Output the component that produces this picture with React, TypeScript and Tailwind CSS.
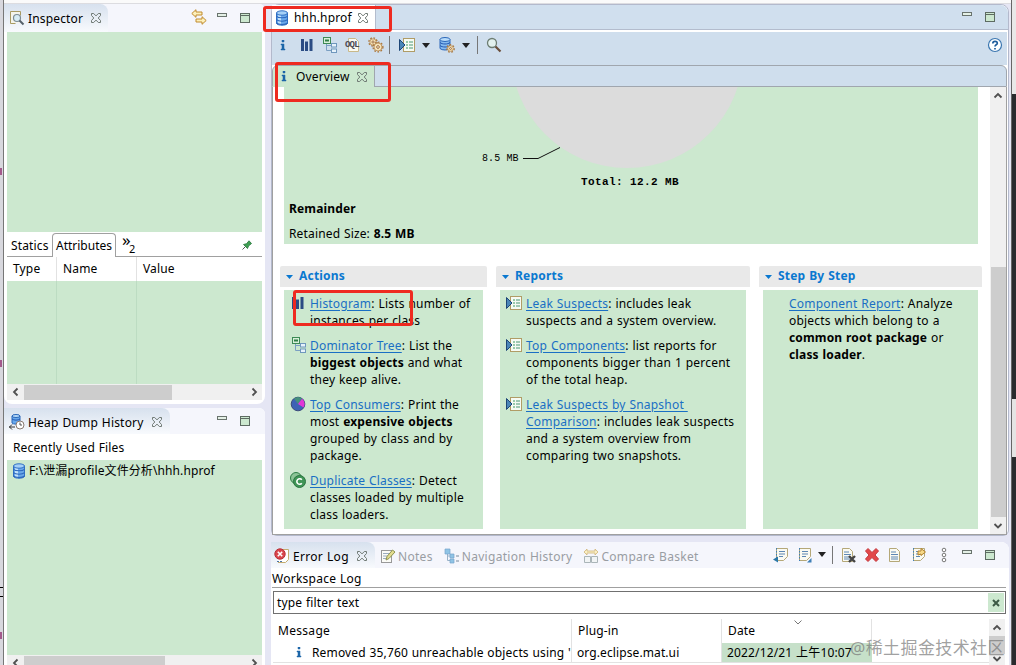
import type { ReactNode } from 'react';
import clsx from 'clsx';

type IconProps = { className?: string };

interface SvgProps extends IconProps {
  children: ReactNode;
  size?: number;
}

function Svg({ children, className, size = 16 }: SvgProps) {
  return (
    <svg
      width={size}
      height={size}
      viewBox="0 0 16 16"
      fill="none"
      className={clsx('shrink-0', className)}
    >
      {children}
    </svg>
  );
}

const CloseIcon = ({ className }: IconProps) => (
  <svg width="12" height="12" viewBox="0 0 12 12" fill="none" className={clsx('shrink-0', className)}>
    <path
      d="M1.500 1.500h2.200L6 3.900l2.300-2.400h2.200v2L8.200 6l2.300 2.500v2H8.300L6 8.100l-2.300 2.400H1.500v-2L3.800 6 1.500 3.500z"
      stroke="#707a75"
    />
  </svg>
);

const MinimizeIcon = ({ className }: IconProps) => (
  <svg width="10" height="4" viewBox="0 0 10 4" className={clsx('shrink-0', className)}>
    <rect x=".5" y=".5" width="9" height="3" fill="#e4f0e6" stroke="#69736d" />
  </svg>
);

const MaximizeIcon = ({ className }: IconProps) => (
  <svg width="10" height="10" viewBox="0 0 10 10" className={clsx('shrink-0', className)}>
    <rect x=".5" y=".5" width="9" height="9" fill="#cce8cf" stroke="#5d6b62" />
    <path d="M0 2.500h10" stroke="#5d6b62" />
  </svg>
);

const WindowControls = ({ className }: IconProps) => (
  <div className={clsx('flex items-start gap-[13px]', className)}>
    <MinimizeIcon />
    <MaximizeIcon />
  </div>
);

const Caret = ({ className }: IconProps) => (
  <svg width="8" height="5" viewBox="0 0 8 5" className={clsx('shrink-0', className)}>
    <path d="M0 0h8L4 5z" fill="#222" />
  </svg>
);

const InfoIcon = ({ className }: IconProps) => (
  <svg width="6" height="11" viewBox="0 0 6 11" className={clsx('shrink-0', className)}>
    <path d="M2 0h2v2H2zM1 4h3v5h1v1H1V9h1V5H1z" fill="#1c67a8" stroke="#1c67a8" strokeWidth=".5" />
  </svg>
);

const DatabaseIcon = ({ className }: IconProps) => (
  <Svg className={className}>
    <path d="M2.500 3v10.500C4 15.800 12 15.800 13.500 13.500V3z" fill="#6aa8ea" stroke="#2f6fc4" />
    <path d="M4 4v10c1 .8 2 1 3 1.200V5z" fill="#c2e2fb" />
    <path
      d="M2.500 6.300c2 2 9 2 11 0M2.500 9.700c2 2 9 2 11 0M2.500 13c2 2 9 2 11 0"
      stroke="#2b66bd"
      strokeWidth="1.100"
    />
    <ellipse cx="8" cy="3" rx="5.500" ry="2.200" fill="#a5d0f7" stroke="#2f6fc4" />
  </Svg>
);

const InspectorIcon = () => (
  <Svg>
    <path d="M2 2h9v11H2z" fill="#f4f4ec" />
    <path d="M1.500 1.500h10v4M1.500 1.500v12h5" stroke="#a99b62" />
    <circle cx="8" cy="8" r="3.500" fill="#d7ecf4" stroke="#7d8c94" strokeWidth="1.200" />
    <path d="M10.500 10.500l4 4" stroke="#55606a" strokeWidth="2" />
  </Svg>
);

const LinkArrowsIcon = () => (
  <Svg>
    <path d="M.8 4.500L5 .7v2.300h6v3H5v2.300z" fill="#fdf0b9" stroke="#c08a2c" />
    <path d="M15.200 11.500L11 7.700V10H5v3h6v2.300z" fill="#fdf0b9" stroke="#c08a2c" />
  </Svg>
);

const PinIcon = () => (
  <svg width="10" height="10" viewBox="0 0 10 10" className="shrink-0">
    <path d="M.5 9.500l3-3" stroke="#555" />
    <path d="M1.500 4.500l4 4 1-2.500 3-2.500L7 .8 4.500 3.700z" fill="#3f9f54" stroke="#27743a" strokeWidth=".8" />
  </svg>
);

const HistoryIcon = () => (
  <Svg>
    <path d="M3 2v7c1.500 1.500 6 1.500 8 0V2z" fill="#69a9ec" stroke="#2a66b8" />
    <path d="M3 5c2 1.500 6 1.500 8 0" stroke="#2358b0" />
    <ellipse cx="7" cy="2" rx="4" ry="1.500" fill="#b9dcfa" stroke="#2a66b8" />
    <circle cx="11" cy="11" r="4" fill="#fff" stroke="#8a7b72" />
    <path d="M11 8.500V11h2" stroke="#555" />
    <path d="M0 13h6M3 10.500L.5 13 3 15.500" stroke="#333" />
  </Svg>
);

const HistogramIcon = ({ className }: IconProps) => (
  <Svg className={className}>
    <path d="M2 2h3v12H2zM6 4.500h3V14H6zM10.500 2h3v12h-3z" fill="#2b4c84" />
  </Svg>
);

const TreeIcon = ({ className }: IconProps) => (
  <Svg className={className}>
    <path d="M4.500 7v6.500H10M4.500 8.500H10" stroke="#7a9fc2" />
    <rect x="1.500" y=".5" width="7" height="6" fill="#d8f0da" stroke="#3d8a55" />
    <path d="M3 3.500h4" stroke="#2f7d45" strokeWidth="2" />
    <rect x="9.500" y="6.500" width="5" height="3.500" fill="#e6f2fb" stroke="#6f97bd" />
    <rect x="9.500" y="12" width="5" height="3.500" fill="#e6f2fb" stroke="#6f97bd" />
  </Svg>
);

const OqlIcon = () => (
  <div className="relative h-4 w-4 shrink-0">
    <Svg>
      <path d="M3.500 1.500h7l3 3v10h-10z" fill="#fbfaf2" stroke="#c9b98a" />
    </Svg>
    <span className="absolute top-[4px] left-0 font-['Liberation_Mono'] text-[9px] leading-[9px] font-bold tracking-[-0.8px] text-[#4a4a55]">
      OQL
    </span>
  </div>
);

const GearIcon = ({ x = 8, y = 8, r = 4 }: { x?: number; y?: number; r?: number }) => (
  <>
    <circle cx={x} cy={y} r={r + 0.9} stroke="#ab7a42" strokeWidth="1.400" strokeDasharray="1.700 1.500" />
    <circle cx={x} cy={y} r={r} fill="#f5e3ba" stroke="#b5874c" strokeWidth=".8" />
    <circle cx={x} cy={y} r={r / 3} fill="#fff" stroke="#96622a" strokeWidth=".9" />
  </>
);

const GearsIcon = () => (
  <Svg>
    <GearIcon x={5} y={5} r={3.2} />
    <GearIcon x={10} y={10} r={4} />
  </Svg>
);

const ReportIcon = ({ className }: IconProps) => (
  <Svg className={className}>
    <rect x="4.500" y="1.500" width="11" height="13" fill="#f6fbf4" stroke="#b09c66" />
    <path d="M7 5h2M7 8h2M7 11h2" stroke="#3c9a62" />
    <path d="M10 5h4M10 8h4M10 11h4" stroke="#4a9874" />
    <path d="M.5 2.500v11L6 8z" fill="#4a86b8" stroke="#1d4676" />
  </Svg>
);

const DatabaseGearIcon = () => (
  <Svg>
    <path d="M1 2.500v9c2 2 8 2 10 0v-9z" fill="#86bbf0" stroke="#2a66b8" />
    <path d="M1 5.500c2 2 8 2 10 0M1 8.500c2 2 8 2 10 0" stroke="#2358b0" />
    <ellipse cx="6" cy="2.500" rx="5" ry="2" fill="#b9dcfa" stroke="#2a66b8" />
    <GearIcon x={11.5} y={11.5} r={2.8} />
  </Svg>
);

const SearchIcon = () => (
  <Svg>
    <circle cx="6" cy="6" r="4.500" fill="#e3f1ee" stroke="#6d7d72" strokeWidth="1.300" />
    <path d="M9.500 9.500l5 5" stroke="#6b4f3b" strokeWidth="2.200" />
  </Svg>
);

const HelpIcon = () => (
  <Svg>
    <circle cx="8" cy="8" r="6.500" fill="#fff" stroke="#3a76b0" strokeWidth="1.200" />
    <path
      d="M5.800 6.500c0-3 4.500-2.800 4.500-.3C10.300 7.800 8 7.800 8 9.500M8 11v1.600"
      stroke="#1f5d9c"
      strokeWidth="1.700"
    />
  </Svg>
);

const PieIcon = ({ className }: IconProps) => (
  <Svg className={className}>
    <circle cx="8" cy="8" r="6.800" fill="#3d62b5" stroke="#3b4a7a" />
    <path d="M8 8L4 2.500a6.500 6.500 0 0 1 8 0z" fill="#45907d" />
    <path d="M8 8l4-5.200a6.500 6.500 0 0 1 1.500 8.700z" fill="#e238d6" />
  </Svg>
);

const DuplicateIcon = ({ className }: IconProps) => (
  <Svg className={className}>
    <circle cx="6" cy="6" r="5.500" fill="#8cc497" stroke="#2e7d46" />
    <circle cx="9.500" cy="9.500" r="6" fill="#3f9556" stroke="#2a7440" />
    <path d="M11.800 7.700a2.800 2.800 0 1 0 0 3.600" stroke="#fff" strokeWidth="1.600" />
  </Svg>
);

const ErrorLogIcon = () => (
  <Svg>
    <path d="M5 1.500h9.500v10l-3 3H4" fill="#fff" stroke="#c5ad70" />
    <circle cx="6" cy="6" r="5.200" fill="#d9464c" stroke="#b92f38" />
    <path d="M3.800 3.800l4.400 4.400M8.200 3.800L3.800 8.200" stroke="#fff" strokeWidth="1.600" />
    <path d="M3 13.500h6" stroke="#4b75a8" strokeDasharray="2 1" />
  </Svg>
);

const NotesIcon = () => (
  <Svg>
    <rect x="1.500" y="2.500" width="10" height="12" fill="#fbfbf7" stroke="#999" />
    <path d="M3 5.500h6M3 8h5M3 10.500h3" stroke="#9bacc0" />
    <path d="M6 12l1-3.500L12.500 2 15 4 9 10.500z" fill="#e3dc8e" stroke="#8e9450" />
  </Svg>
);

const NavigationIcon = () => (
  <Svg>
    <path d="M3.500 5v7.500H8M3.500 8H8" stroke="#9ab2c8" />
    <path d="M1 1h5v5H1zM6 6h4v4H6zM6 11h4v4H6z" fill="#8fc4e5" stroke="#77a5cb" strokeWidth=".7" />
    <path d="M12 8h3M12 13h3" stroke="#789" strokeWidth="1.200" />
  </Svg>
);

const CompareIcon = () => (
  <Svg>
    <path d="M1 4l3-3v2h8V1l3 3-3 3V5H4v2z" fill="#fbf0c5" stroke="#cfb477" strokeWidth=".8" />
    <path d="M1.500 8.500h6v6h-6zM8.500 8.500h6v6h-6z" fill="#f1f4f5" stroke="#aab5b8" />
  </Svg>
);

// Log page with ruled lines; transfer variants use a dotted blue margin
const SheetIcon = ({ variant }: { variant?: 'export' | 'import' | 'clear' | 'restore' }) => (
  <Svg>
    {variant === 'export' || variant === 'import' || variant === 'restore' ? (
      <>
        <path d="M3.500 1.500h11v8l-4 4h-7z" fill="#fafaf2" stroke="#b5a878" />
        <path d="M3.500 1v13" stroke="#3f7fb6" strokeDasharray="1.500 1.500" />
        <path d="M6 4.500h6M6 7h6M6 9.500h4" stroke="#5c87b4" />
      </>
    ) : (
      <>
        <path d="M2.500 1.500h7l3 3v10h-10z" fill="#fafaf2" stroke="#b5a878" />
        <path d="M4 5h5M4 7.500h7M4 10h7M4 12h7" stroke="#5c87b4" />
      </>
    )}
    {variant === 'export' && <path d="M0 12.500l5-3v6z" fill="#2c78a8" />}
    {variant === 'import' && <path d="M15.500 11v4.500H11z" fill="#3f7fb6" />}
    {variant === 'clear' && <path d="M9 9l6 6M15 9l-6 6" stroke="#444" strokeWidth="2.400" />}
    {variant === 'restore' && (
      <path d="M8 8V4h3V1.500L15.500 5 11 8.500V7z" fill="#f6d987" stroke="#b3822c" />
    )}
  </Svg>
);

const DeleteIcon = () => (
  <Svg>
    <path
      d="M1.500 4l2.500-2.500 4 4 4-4L14.500 4 11 8l3.500 4-2.500 2.500-4-4-4 4L1.500 12 5 8z"
      fill="#e2484a"
      stroke="#c5383c"
    />
  </Svg>
);

const MoreIcon = () => (
  <Svg>
    <g stroke="#777" fill="#fff">
      <circle cx="8" cy="3" r="1.800" />
      <circle cx="8" cy="8" r="1.800" />
      <circle cx="8" cy="13" r="1.800" />
    </g>
  </Svg>
);

const chevrons = {
  up: 'M1.500 6.500L5 3 8.500 6.500',
  down: 'M1.500 3L5 6.500 8.500 3',
  left: 'M6.500 1.500L3 5l3.500 3.500',
  right: 'M3.500 1.500L7 5 3.500 8.500',
};

const Chevron = ({ dir }: { dir: keyof typeof chevrons }) => (
  <svg width="10" height="10" viewBox="0 0 10 10" fill="none" className="shrink-0">
    <path d={chevrons[dir]} stroke="#505050" strokeWidth="1.800" />
  </svg>
);

function HScrollbar({ thumb }: { thumb: string }) {
  return (
    <div className="flex h-4 shrink-0 items-center bg-[#f0f0f0]">
      <div className="flex w-[17px] justify-center">
        <Chevron dir="left" />
      </div>
      <div className={clsx('h-[15px] bg-[#cdcdcd]', thumb)} />
      <div className="ml-auto flex w-[17px] justify-center">
        <Chevron dir="right" />
      </div>
    </div>
  );
}

const Link = ({ children }: { children: ReactNode }) => (
  <span className="text-[#1a6fc4] underline underline-offset-2">{children}</span>
);

function Item({ icon, children }: { icon?: ReactNode; children: ReactNode }) {
  return (
    <div className="mb-2 flex">
      <div className="w-[20px] shrink-0">{icon}</div>
      <p className="whitespace-nowrap">{children}</p>
    </div>
  );
}

interface SectionProps {
  title: string;
  width: string;
  children: ReactNode;
}

function Section({ title, width, children }: SectionProps) {
  return (
    <section className={clsx('flex shrink-0 flex-col', width)}>
      <h2 className="flex h-[21px] items-center gap-[6px] rounded-t-xs bg-[#e9e9e9] pb-[2px] pl-[6px] font-bold tracking-[0.2px] text-[#0a78d0]">
        <svg width="7" height="4" viewBox="0 0 7 4" className="mt-[2px]">
          <path d="M0 0h7L3.500 4z" fill="#0a78d0" />
        </svg>
        {title}
      </h2>
      <div className="mx-1 mt-[3px] h-[239px] bg-[#cce8cf] pt-[5px] pl-[6px] leading-[17px] tracking-[0.2px]">
        {children}
      </div>
    </section>
  );
}

function InspectorView() {
  return (
    <section className="flex h-[400px] flex-col rounded-t-md rounded-b-lg bg-white px-[3px] pb-[3px]">
      <header className="-mx-[3px] flex h-[28px] shrink-0 items-center rounded-t-md bg-[#f5f6fc]">
        <div className="flex h-full w-[104px] items-center rounded-tr-lg bg-linear-to-b from-[#d7e1ee] to-[#f8fafd] pl-[5px]">
          <InspectorIcon />
          <span className="ml-[3px]">Inspector</span>
          <CloseIcon className="ml-[7px]" />
        </div>
        <div className="ml-auto flex pr-[15px] pb-[3px]">
          <LinkArrowsIcon />
          <WindowControls className="mt-[4px] ml-[10px]" />
        </div>
      </header>
      <div className="h-[200px] shrink-0 bg-[#cce8cf]" />
      <div className="flex h-[25px] shrink-0 items-end border-b border-[#a0a0a0]">
        <span className="flex h-[22px] w-[45px] items-center pl-1">Statics</span>
        <span className="-mb-px flex h-[24px] w-[64px] items-center justify-center rounded-t border border-b-0 border-[#a0a0a0] bg-white tracking-normal">
          Attributes
        </span>
        <span className="relative h-[23px] w-5 pl-[6px] text-[17px] leading-[13px]">
          »<sub className="absolute top-[10px] left-[13px] text-[11px] leading-[12px]">2</sub>
        </span>
        <div className="mr-[10px] ml-auto pb-[6px]">
          <PinIcon />
        </div>
      </div>
      <div className="flex h-[24px] shrink-0 items-center">
        <span className="flex h-full w-[50px] items-center border-r border-[#e2e2e2] pb-px pl-[6px]">Type</span>
        <span className="flex h-full w-[80px] items-center border-r border-[#e2e2e2] pb-px pl-[6px]">Name</span>
        <span className="pb-px pl-[6px]">Value</span>
      </div>
      <div className="flex h-[103px] shrink-0 bg-[#cce8cf]">
        <div className="w-[50px] border-r border-[#bcdcc2]" />
        <div className="w-[80px] border-r border-[#bcdcc2]" />
      </div>
      <HScrollbar thumb="w-[148px]" />
    </section>
  );
}

function HeapHistoryView() {
  return (
    <section className="mt-[4px] flex flex-1 flex-col rounded-t-md bg-white px-[3px]">
      <header className="-mx-[3px] flex h-[26px] shrink-0 items-center rounded-t-md bg-[#f5f6fc]">
        <div className="flex h-full w-[166px] items-center rounded-tr-lg bg-linear-to-b from-[#d7e1ee] to-[#f8fafd] pt-[2px] pl-[5px]">
          <HistoryIcon />
          <span className="ml-[3px] tracking-[0.2px]">Heap Dump History</span>
          <CloseIcon className="ml-[7px]" />
        </div>
        <WindowControls className="mr-[15px] ml-auto" />
      </header>
      <div className="flex h-[26px] shrink-0 items-center pt-px pl-[6px]">Recently Used Files</div>
      <div className="h-[195px] shrink-0 bg-[#cce8cf] pl-1">
        <div className="flex h-[21px] items-center gap-[2px] whitespace-nowrap">
          <DatabaseIcon />
          <span className="tracking-[0.1px]">F:\泄漏profile文件分析\hhh.hprof</span>
        </div>
      </div>
      <HScrollbar thumb="w-[141px]" />
    </section>
  );
}

function OverviewPage() {
  return (
    <div className="flex h-[448px] border-x border-b border-[#a0a0a0] bg-white">
      <div className="w-[717px] overflow-hidden pl-[7px]">
        <div className="relative ml-1 h-[157px] w-[694px] overflow-hidden bg-[#cce8cf]">
          <svg width="694" height="157" className="absolute inset-0">
            <circle cx="343" cy="-35" r="116" fill="#dcdcdc" />
            <path d="M239 71.500h15l22-11" fill="none" stroke="#111" />
          </svg>
          <span className="absolute top-[65px] left-[198px] font-['Liberation_Mono'] text-[10px] leading-[13px] tracking-[0.1px] [word-spacing:0px]">
            8.5 MB
          </span>
          <span className="absolute top-[89px] left-[297px] font-['Liberation_Mono'] text-[11px] leading-[13px] font-bold tracking-[0.4px] [word-spacing:0px]">
            Total: 12.2 MB
          </span>
          <strong className="absolute top-[113px] left-[5px]">Remainder</strong>
          <span className="absolute top-[138px] left-[5px]">
            Retained Size: <strong>8.5 MB</strong>
          </span>
        </div>
        <div className="mt-[22px] flex gap-[9px]">
          <Section title="Actions" width="w-[207px]">
            <Item icon={<HistogramIcon />}>
              <Link>Histogram</Link>: Lists number of
              <br />
              instances per class
            </Item>
            <Item icon={<TreeIcon className="ml-px" />}>
              <Link>Dominator Tree</Link>: List the
              <br />
              <strong>biggest objects</strong> and what
              <br />
              they keep alive.
            </Item>
            <Item icon={<PieIcon />}>
              <Link>Top Consumers</Link>: Print the
              <br />
              most <strong>expensive objects</strong>
              <br />
              grouped by class and by
              <br />
              package.
            </Item>
            <Item icon={<DuplicateIcon />}>
              <Link>Duplicate Classes</Link>: Detect
              <br />
              classes loaded by multiple
              <br />
              class loaders.
            </Item>
          </Section>
          <Section title="Reports" width="w-[254px]">
            <Item icon={<ReportIcon />}>
              <Link>Leak Suspects</Link>: includes leak
              <br />
              suspects and a system overview.
            </Item>
            <Item icon={<ReportIcon />}>
              <Link>Top Components</Link>: list reports for
              <br />
              components bigger than 1 percent
              <br />
              of the total heap.
            </Item>
            <Item icon={<ReportIcon />}>
              <Link>Leak Suspects by Snapshot&nbsp;</Link>
              <br />
              <Link>Comparison</Link>: includes leak suspects
              <br />
              and a system overview from
              <br />
              comparing two snapshots.
            </Item>
          </Section>
          <Section title="Step By Step" width="w-[223px]">
            <Item>
              <Link>Component Report</Link>: Analyze
              <br />
              objects which belong to a
              <br />
              <strong>common root package</strong> or
              <br />
              <strong>class loader</strong>.
            </Item>
          </Section>
        </div>
      </div>
      <div className="flex w-4 flex-col items-center bg-[#f0f0f0]">
        <div className="flex h-[180px] pt-1">
          <Chevron dir="up" />
        </div>
        <div className="h-[250px] w-[15px] bg-[#cdcdcd]" />
        <div className="mt-[4px]">
          <Chevron dir="down" />
        </div>
      </div>
    </div>
  );
}

function EditorArea() {
  return (
    <section className="flex h-[532px] w-[738px] flex-col rounded-t-lg rounded-b-md border border-[#b3b9cc] bg-white pr-[1px]">
      <header className="-mr-[1px] flex h-[25px] shrink-0 items-center rounded-tr-lg border-b border-[#b3bccd] bg-[#d0dfee]">
        <div className="flex h-full w-[104px] items-center border-r border-[#b3bccd] bg-white pt-px pl-[2px]">
          <DatabaseIcon />
          <span className="ml-[4px]">hhh.hprof</span>
          <CloseIcon className="ml-[5px]" />
        </div>
        <WindowControls className="mr-[13px] ml-auto" />
      </header>
      <div className="mt-[2px] flex h-[33px] shrink-0 items-center bg-[#cfdeed] pr-1 pb-[7px] pl-[8px]">
        <InfoIcon />
        <HistogramIcon className="ml-[13px]" />
        <TreeIcon className="ml-[7px]" />
        <div className="ml-[7px]">
          <OqlIcon />
        </div>
        <div className="ml-[7px]">
          <GearsIcon />
        </div>
        <div className="ml-[5px] h-[18px] w-px bg-[#777]" />
        <ReportIcon className="ml-[9px]" />
        <Caret className="ml-[7px]" />
        <div className="ml-[9px]">
          <DatabaseGearIcon />
        </div>
        <Caret className="ml-[7px]" />
        <div className="ml-[7px] h-[18px] w-px bg-[#777]" />
        <div className="ml-[8px]">
          <SearchIcon />
        </div>
        <div className="ml-auto">
          <HelpIcon />
        </div>
      </div>
      <div className="flex h-[22px] shrink-0 items-center rounded-t-md border border-[#a0a6ae] bg-[#cfdeed]">
        <div className="-mb-px flex h-[22px] w-[102px] items-center rounded-tl-md border-r border-[#a0a6ae] bg-[#cce8cf] pl-[8px]">
          <InfoIcon />
          <span className="ml-[9px]">Overview</span>
          <CloseIcon className="ml-[6px]" />
        </div>
      </div>
      <OverviewPage />
    </section>
  );
}

const tabs = [
  { label: 'Notes', icon: <NotesIcon />, space: 'ml-[5px]' },
  { label: 'Navigation History', icon: <NavigationIcon />, space: 'ml-[11px]' },
  { label: 'Compare Basket', icon: <CompareIcon />, space: 'ml-[11px]' },
];

function ErrorLogView() {
  return (
    <section className="mt-[6px] flex flex-1 flex-col rounded-t-lg bg-white">
      <header className="flex h-[26px] shrink-0 items-center rounded-t-lg bg-[#f5f6fc] whitespace-nowrap">
        <div className="flex h-full w-[104px] items-center rounded-tr-lg bg-linear-to-b from-[#d7e1ee] to-[#f8fafd] pt-[2px] pl-[3px]">
          <ErrorLogIcon />
          <span className="ml-[3px] tracking-[0.3px]">Error Log</span>
          <CloseIcon className="ml-[7px]" />
        </div>
        {tabs.map((tab) => (
          <div
            key={tab.label}
            className={clsx('flex items-center gap-[2px] pt-[2px] tracking-[0.3px] text-[#999da3]', tab.space)}
          >
            {tab.icon}
            <span>{tab.label}</span>
          </div>
        ))}
        <div className="ml-auto flex items-center pr-[14px] pb-px">
          <SheetIcon variant="export" />
          <div className="ml-[7px]">
            <SheetIcon variant="import" />
          </div>
          <Caret className="ml-[6px]" />
          <div className="mr-[7px] ml-[6px] h-[18px] w-px bg-[#777]" />
          <SheetIcon variant="clear" />
          <div className="ml-[8px]">
            <DeleteIcon />
          </div>
          <div className="ml-[7px]">
            <SheetIcon />
          </div>
          <div className="ml-[7px]">
            <SheetIcon variant="restore" />
          </div>
          <div className="ml-[10px]">
            <MoreIcon />
          </div>
          <WindowControls className="ml-[10px]" />
        </div>
      </header>
      <div className="mr-[3px] ml-px flex h-[20px] shrink-0 items-center border-b border-[#a0a0a0] pt-[2px] tracking-[0.25px]">
        Workspace Log
      </div>
      <div className="mt-[3px] mr-[3px] ml-[2px] flex h-[23px] shrink-0 items-center justify-between border border-[#707070] pr-px pl-[3px]">
        <span>type filter text</span>
        <span className="flex h-[19px] w-4 items-center justify-center bg-[#cce8cf]">
          <svg width="8" height="8" viewBox="0 0 8 8">
            <path d="M1 1l6 6M7 1L1 7" stroke="#3c5a45" strokeWidth="2" />
          </svg>
        </span>
      </div>
      <div className="mt-[5px] mr-[4px] ml-[2px] flex h-[46px]">
        <div className="flex-1">
          <div className="flex h-[24px] items-center">
            <span className="flex h-full w-[299px] items-center border-r border-[#e2e2e2] pb-px pl-[5px] tracking-[0.3px]">
              Message
            </span>
            <span className="flex h-full w-[150px] items-center border-r border-[#e2e2e2] pb-px pl-[6px]">Plug-in</span>
            <span className="relative flex h-full w-[150px] items-center border-r border-[#e2e2e2] pb-px pl-[6px]">
              Date
              <svg width="8" height="5" viewBox="0 0 8 5" fill="none" className="absolute top-px left-[72px]">
                <path d="M.5 .5L4 4 7.500 .5" stroke="#777" />
              </svg>
            </span>
          </div>
          <div className="flex h-[20px] items-center border-b border-[#e2e2e2] whitespace-nowrap">
            <span className="flex h-full w-[299px] items-center overflow-hidden border-r border-[#e2e2e2] pl-[23px]">
              <InfoIcon />
              <span className="ml-[10px] w-[259px] overflow-hidden">Removed 35,760 unreachable objects using '</span>
            </span>
            <span className="flex h-full w-[150px] items-center border-r border-[#e2e2e2] pl-[5px] tracking-[0.1px]">
              org.eclipse.mat.ui
            </span>
            <span className="flex h-full w-[150px] items-center bg-[#c6e0c9] pl-[5px]">
              2022/12/21 上午10:07
            </span>
          </div>
        </div>
        <div className="flex w-4 shrink-0 flex-col items-center bg-[#f0f0f0]">
          <div className="h-[17px] pt-1">
            <Chevron dir="up" />
          </div>
          <div className="h-[18px] w-4 shrink-0 bg-[#cdcdcd]" />
          <Chevron dir="down" />
        </div>
      </div>
    </section>
  );
}

export default function App() {
  return (
    <div className="relative flex h-[665px] w-[1016px] overflow-hidden bg-[#e5e6f4] font-['Noto_Sans','Noto_Sans_CJK_SC',sans-serif] text-[12px] leading-[17px] tracking-[0.15px] text-black [word-spacing:0.500px] [&_strong]:tracking-[0.15px]">
      {/* Window edge */}
      <div className="w-[4px] shrink-0 border-r border-[#777] bg-[#d8d8de]">
        <div className="mt-[168px] h-[7px] w-[2px] bg-[#a35a8c]" />
        <div className="mt-[185px] h-[7px] w-[2px] bg-[#a35a8c]" />
        <div className="mt-[220px] h-px w-[3px] bg-black" />
        <div className="mt-[8px] h-px w-[3px] bg-black" />
        <div className="mt-[35px] h-[7px] w-[2px] bg-[#a35a8c]" />
      </div>
      <div className="flex min-w-0 flex-1 flex-col">
        <div className="h-[4px] shrink-0 border-b border-[#dcdce0] bg-[#fafafa]" />
        <div className="flex flex-1">
          <div className="flex w-[261px] shrink-0 flex-col">
            <InspectorView />
            <HeapHistoryView />
          </div>
          <div className="ml-[6px] flex w-[738px] flex-col">
            <EditorArea />
            <ErrorLogView />
          </div>
        </div>
      </div>
      <div className="flex w-[5px] shrink-0 flex-col border-l border-[#666] bg-[#292b2e]">
        <div className="h-[94px] bg-[#e8e8e8]" />
        <div className="mt-[305px] h-[58px] bg-[#e4e4e4]" />
      </div>

      {/* Highlight frames */}
      <div className="absolute top-[6px] left-[263px] h-[26px] w-[129px] rounded-[3px] border-3 border-[#ee2a20]" />
      <div className="absolute top-[62px] left-[275px] h-[40px] w-[116px] rounded-[3px] border-3 border-[#ee2a20]" />
      <div className="absolute top-[290px] left-[293px] h-[36px] w-[120px] rounded-[3px] border-3 border-[#ee2a20]" />

      {/* Watermark */}
      <div className="absolute top-[637px] left-[850px] text-[17px] leading-[22px] tracking-[0.4px] whitespace-nowrap text-[#777]/70">
        @稀土掘金技术社区
      </div>
    </div>
  );
}
